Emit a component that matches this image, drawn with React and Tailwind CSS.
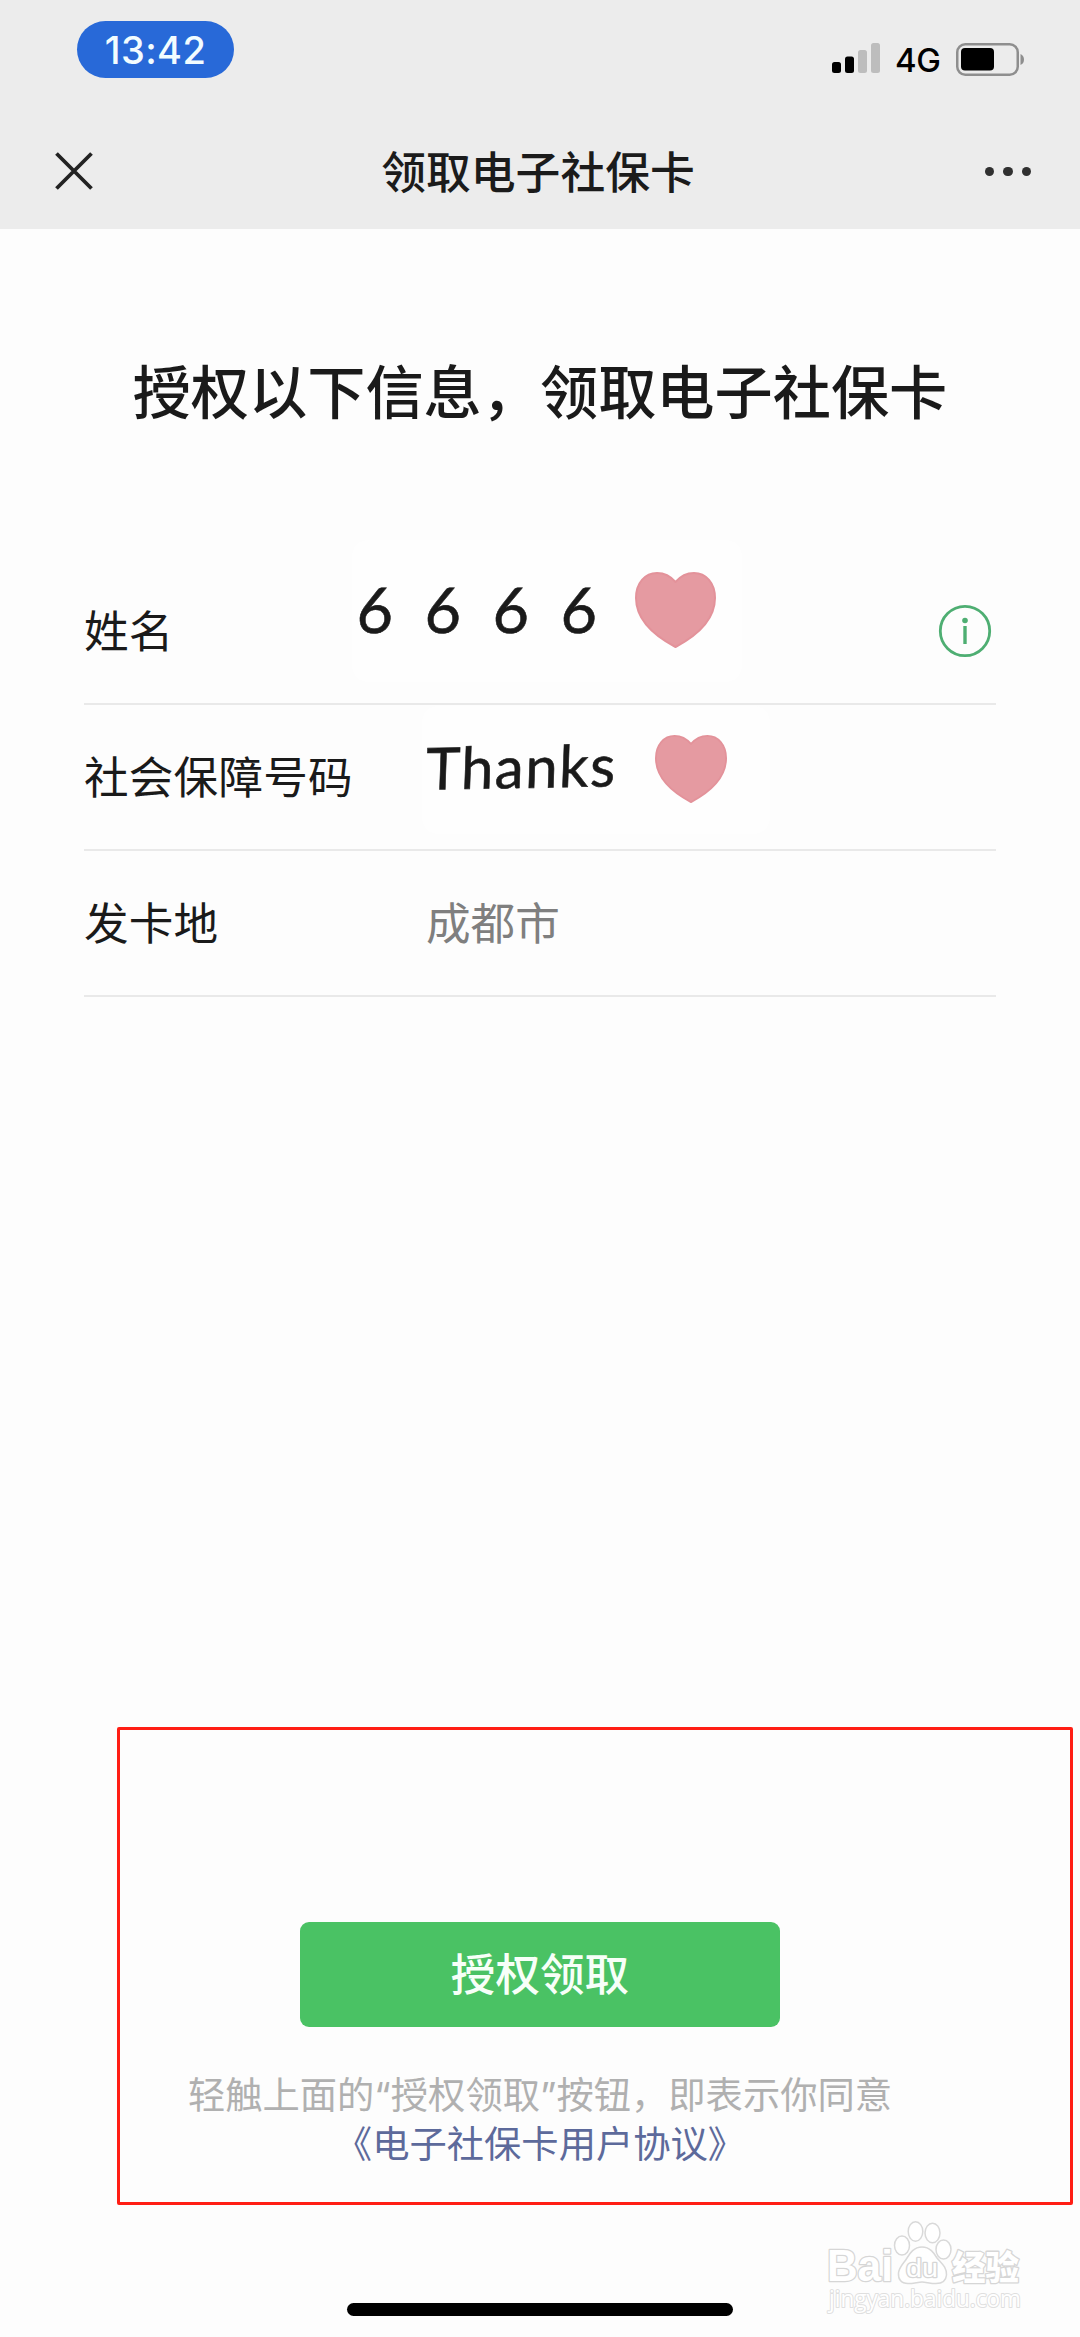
import React from 'react';

const SignalIcon = () => (
  <svg width="48" height="30" viewBox="0 0 48 30">
    <rect x="0" y="19" width="9" height="11" rx="2.5" fill="#000" />
    <rect x="13" y="13.5" width="9" height="16.5" rx="2.5" fill="#000" />
    <rect x="26" y="7" width="9" height="23" rx="2.5" fill="#bdbdbd" />
    <rect x="39" y="0" width="9" height="30" rx="2.5" fill="#bdbdbd" />
  </svg>
);

const BatteryIcon = () => (
  <svg width="69" height="33" viewBox="0 0 69 33">
    <rect x="1.25" y="1.25" width="60.5" height="30.5" rx="8" fill="none" stroke="#8e8e8e" strokeWidth="2.5" />
    <rect x="5" y="5" width="33" height="22.5" rx="4" fill="#000" />
    <path d="M64.5 11 Q68 12.5 68 16.5 Q68 20.5 64.5 22 Z" fill="#8e8e8e" />
  </svg>
);

const Heart = ({ className }) => (
  <svg className={className} viewBox="0 0 81 76" preserveAspectRatio="none">
    <path
      d="M40.5 10 C46 3.5 53 1 59 1 C71 1 80 11 80 26 C80 45 65 62 40.5 75 C16 62 1 45 1 26 C1 11 10 1 22 1 C28 1 35 3.5 40.5 10 Z"
      fill="#e59aa1"
      stroke="#e3929a"
      strokeWidth="2"
      strokeLinejoin="round"
    />
  </svg>
);

const Watermark = () => (
  <svg className="absolute left-[820px] top-[2215px]" width="210" height="105" viewBox="0 0 210 105">
    <g fill="#fff" stroke="#d9d9d9" strokeWidth="1.5">
      <ellipse cx="95.5" cy="16.5" rx="7.3" ry="9.7" />
      <ellipse cx="112.5" cy="18" rx="7.5" ry="9.7" />
      <ellipse cx="82" cy="30.5" rx="7.5" ry="9.5" />
      <ellipse cx="123.5" cy="34.5" rx="7.5" ry="9.5" />
      <path d="M102 32 C110 32 114 38 117 43 C121 48 127 52 126.5 60 C126 66 122 68.5 116 68.5 C110 68.5 106 67 102 67 C98 67 94 68.5 88 68.5 C81 68.5 78 64 78.5 58 C79 52 84 48 87 43 C90 38 94 32 102 32 Z" />
    </g>
    <g fill="#fff" stroke="#d6d6d6" strokeWidth="2.6" paintOrder="stroke" strokeLinejoin="round">
      <text x="7" y="66" fontSize="44" fontWeight="700" fontFamily="Liberation Sans, sans-serif" textLength="66" lengthAdjust="spacingAndGlyphs">Bai</text>
      <text x="86" y="62" fontSize="26" fontFamily="Liberation Sans, sans-serif" textLength="32" lengthAdjust="spacingAndGlyphs">du</text>
      <text x="132" y="65" fontSize="34" fontWeight="900" fontFamily="Noto Sans CJK SC, sans-serif" textLength="67" lengthAdjust="spacingAndGlyphs">经验</text>
      <text x="9" y="92" fontSize="23" strokeWidth="2" stroke="#dfdfdf" fontFamily="Open Sans, sans-serif" textLength="192" lengthAdjust="spacingAndGlyphs">jingyan.baidu.com</text>
    </g>
  </svg>
);

const rows = [
  { label: '姓名', info: true },
  { label: '社会保障号码' },
  { label: '发卡地', value: '成都市' },
];

function StatusBar() {
  return (
    <div className="flex h-[78px] justify-between pl-[77px] pr-[55px]">
      <div className="mt-[21px] flex h-[57px] w-[157px] items-center justify-center rounded-full bg-[#2869d8] font-['Inter'] text-[38px] leading-none font-medium tracking-[0.4px] text-[#f2fcff]">
        13:42
      </div>
      <div className="flex pt-[43px]">
        <SignalIcon />
        <span className="ml-[15px] mt-[1px] w-[46px] font-['Inter'] text-[33px] leading-[33px] font-medium tracking-[-0.5px] text-black">4G</span>
        <span className="ml-[15px]"><BatteryIcon /></span>
      </div>
    </div>
  );
}

function NavBar() {
  return (
    <div className="flex h-[151px] items-center justify-between pl-[55px] pr-[49px] pt-[36px]">
      <svg className="mb-[1px] w-[110px]" height="38" viewBox="0 0 110 38" fill="none" stroke="#222" strokeWidth="3.8">
        <path d="M1.5 1.5 L36.5 36.5 M36.5 1.5 L1.5 36.5" />
      </svg>
      <div className="mb-[4px] mr-[10px] text-[44.8px] leading-[60px] font-medium text-[#1b1b1b]">领取电子社保卡</div>
      <div className="flex w-[110px] justify-end gap-[9px]">
        <i className="size-[9.4px] rounded-full bg-[#303030]" />
        <i className="size-[9.4px] rounded-full bg-[#303030]" />
        <i className="size-[9.4px] rounded-full bg-[#303030]" />
      </div>
    </div>
  );
}

function App() {
  return (
    <div className="relative flex h-[2337px] w-[1080px] flex-col overflow-hidden bg-[#fdfdfd] font-['Noto_Sans_CJK_SC',sans-serif] text-[#1a1a1a]">
      <header className="h-[229px] bg-[#ececec]">
        <StatusBar />
        <NavBar />
      </header>

      <main className="flex flex-1 flex-col items-center">
        <h1 className="mt-[120px] h-[80px] whitespace-nowrap text-[58.2px] leading-[80px] font-medium">
          授权以下信息，领取电子社保卡
        </h1>

        <div className="mt-[130px] w-[912px]">
          {rows.map((row) => (
            <div key={row.label} className="flex h-[146px] items-center border-b-2 border-[#e9e9e9] text-[44.6px] leading-[60px]">
              <span className="mb-[5px] w-[342px] tracking-[0.2px]">{row.label}</span>
              <span className="mb-[5px] flex-1 text-[#7f7f7f]">{row.value}</span>
              {row.info && (
                <svg className="mr-[4px]" width="54" height="54" viewBox="0 0 54 54">
                  <circle cx="27" cy="27" r="24.7" fill="none" stroke="#4eae72" strokeWidth="2.8" />
                  <circle cx="27" cy="16.5" r="2.8" fill="#4eae72" />
                  <path d="M27 22 V40" stroke="#4eae72" strokeWidth="3.4" />
                </svg>
              )}
            </div>
          ))}
        </div>

        <button className="mt-[925px] h-[105px] w-[480px] rounded-[9px] bg-[#4ac264] pb-[5px] text-[44.6px] leading-[60px] font-medium text-[#f7fff8]">
          授权领取
        </button>
        <p className="mt-[44px] text-center font-['Inter','Noto_Sans_CJK_SC',sans-serif] text-[37.3px] leading-[49px] whitespace-nowrap text-[#b0b0b0]">
          轻触上面的“授权领取”按钮，即表示你同意
          <br />
          <span className="text-[#5d6a9b]">《电子社保卡用户协议》</span>
        </p>
      </main>

      <footer className="flex h-[34px] justify-center">
        <div className="h-[13px] w-[386px] rounded-full bg-black" />
      </footer>

      {/* stickers covering the private values */}
      <div className="absolute left-[352px] top-[540px] h-[142px] w-[390px] rounded-[16px] bg-[#fefefe]">
        <span className="absolute left-[5px] top-[24px] -skew-x-3 font-['Lato'] text-[63px] leading-[90px] tracking-[31.5px] whitespace-nowrap text-[#1a1a1a] [-webkit-text-stroke:0.6px_#1a1a1a]">6666</span>
        <Heart className="absolute left-[283px] top-[32px] h-[76px] w-[81px]" />
      </div>
      <div className="absolute left-[422px] top-[706px] h-[128px] w-[348px] rounded-[16px] bg-[#fefefe]">
        <span className="absolute left-[4px] top-[15px] -rotate-1 -skew-x-3 font-['Lato'] text-[58px] leading-[90px] tracking-[1.5px] whitespace-nowrap text-[#1a1a1a] [-webkit-text-stroke:0.6px_#1a1a1a]">Thanks</span>
        <Heart className="absolute left-[233px] top-[29px] h-[68px] w-[72px]" />
      </div>

      {/* highlight box */}
      <div className="absolute left-[117px] top-[1727px] h-[478px] w-[956px] rounded-[2px] border-3 border-[#ff1e14]" />
      <Watermark />
    </div>
  );
}

export default App;
